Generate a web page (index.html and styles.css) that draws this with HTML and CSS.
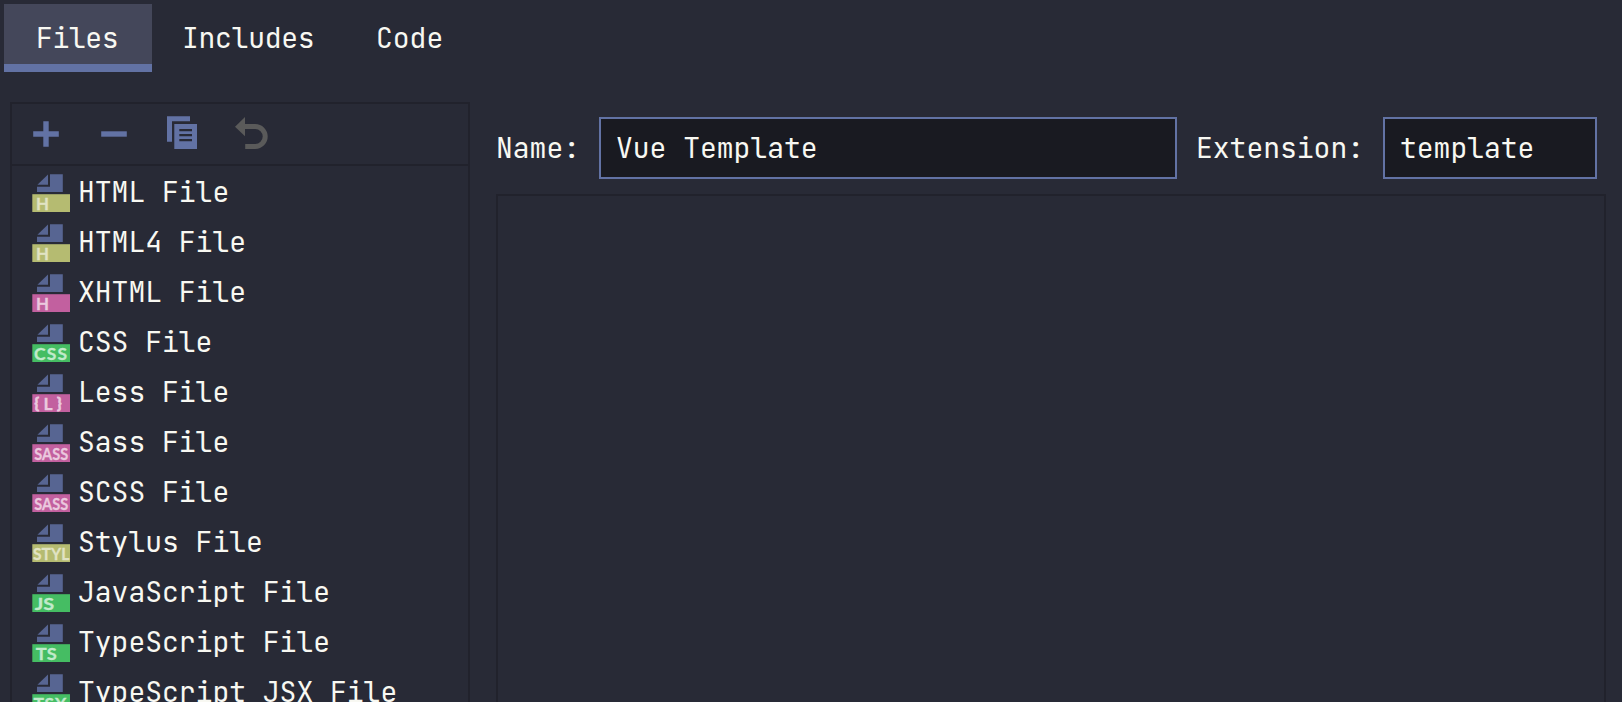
FILE: index.html
```
<!DOCTYPE html>
<html lang="en">
<head>
<meta charset="utf-8">
<title>File Templates</title>
<link rel="stylesheet" href="styles.css">
</head>
<body>
<svg class="defs" width="0" height="0">
  <symbol id="page" viewBox="0 0 38 38">
    <path d="M18 0.3H30.8V18H5V12.7H18Z"/>
    <path d="M5.4 10.7L16 0.5V10.7Z"/>
  </symbol>
</svg>
<nav class="tabs">
  <div class="tab active">Files</div>
  <div class="tab includes">Includes</div>
  <div class="tab">Code</div>
</nav>
<main class="content">
  <section class="sidebar">
    <div class="toolbar">
      <svg class="tool" width="34" height="34" viewBox="0 0 34 34"><path d="M4.2 14.3H14.3V4.2H19.7V14.3H29.8V19.7H19.7V29.8H14.3V19.7H4.2Z"/></svg>
      <svg class="tool" width="34" height="34" viewBox="0 0 34 34"><path d="M4.2 14.3H29.8V19.7H4.2Z"/></svg>
      <svg class="tool" width="34" height="34" viewBox="0 0 34 34"><path d="M2 -0.8H25V4.2H7V24.8H2Z"/><path fill-rule="evenodd" d="M9.3 7H32V32H9.3ZM14.3 12V14.3H27V12ZM14.3 17V19.3H27V17ZM14.3 22V24.3H27V22Z"/></svg>
      <svg class="tool disabled" width="34" height="34" viewBox="0 0 34 34"><path d="M2 9.8L12 0V19.2Z"/><path class="arc" d="M11.5 9.5H22.2A10 10 0 0 1 22.2 29.5H12.2"/></svg>
    </div>
    <div class="list">
      <div class="row"><svg class="icon olive" width="38" height="38"><use href="#page"/><rect x="0.3" y="20.2" width="37.7" height="17.8"/><text x="4" y="36" textLength="13" lengthAdjust="spacingAndGlyphs">H</text></svg>HTML File</div>
      <div class="row"><svg class="icon olive" width="38" height="38"><use href="#page"/><rect x="0.3" y="20.2" width="37.7" height="17.8"/><text x="4" y="36" textLength="13" lengthAdjust="spacingAndGlyphs">H</text></svg>HTML4 File</div>
      <div class="row"><svg class="icon pink" width="38" height="38"><use href="#page"/><rect x="0.3" y="20.2" width="37.7" height="17.8"/><text x="4" y="36" textLength="13" lengthAdjust="spacingAndGlyphs">H</text></svg>XHTML File</div>
      <div class="row"><svg class="icon green" width="38" height="38"><use href="#page"/><rect x="0.3" y="20.2" width="37.7" height="17.8"/><text x="2" y="35.6" textLength="33">CSS</text></svg>CSS File</div>
      <div class="row"><svg class="icon pink" width="38" height="38"><use href="#page"/><rect x="0.3" y="20.2" width="37.7" height="17.8"/><text x="2.4" y="34" class="brace">{</text><text x="11.5" y="36">L</text><text x="25" y="34" class="brace">}</text></svg>Less File</div>
      <div class="row"><svg class="icon pink" width="38" height="38"><use href="#page"/><rect x="0.3" y="20.2" width="37.7" height="17.8"/><text x="2.3" y="35.8" textLength="34" lengthAdjust="spacingAndGlyphs">SASS</text></svg>Sass File</div>
      <div class="row"><svg class="icon pink" width="38" height="38"><use href="#page"/><rect x="0.3" y="20.2" width="37.7" height="17.8"/><text x="2.3" y="35.8" textLength="34" lengthAdjust="spacingAndGlyphs">SASS</text></svg>SCSS File</div>
      <div class="row"><svg class="icon olive" width="38" height="38"><use href="#page"/><rect x="0.3" y="20.2" width="37.7" height="17.8"/><text x="1" y="35.8" textLength="36.3" lengthAdjust="spacingAndGlyphs">STYL</text></svg>Stylus File</div>
      <div class="row"><svg class="icon green" width="38" height="38"><use href="#page"/><rect x="0.3" y="20.2" width="37.7" height="17.8"/><text x="2.7" y="35.6" textLength="19.5" lengthAdjust="spacingAndGlyphs">JS</text></svg>JavaScript File</div>
      <div class="row"><svg class="icon green" width="38" height="38"><use href="#page"/><rect x="0.3" y="20.2" width="37.7" height="17.8"/><text x="3.8" y="36" textLength="21" lengthAdjust="spacingAndGlyphs">TS</text></svg>TypeScript File</div>
      <div class="row"><svg class="icon green" width="38" height="38"><use href="#page"/><rect x="0.3" y="20.2" width="37.7" height="17.8"/><text x="1.5" y="36" textLength="33">TSX</text></svg>TypeScript JSX File</div>
    </div>
  </section>
  <section class="detail">
    <div class="fields">
      <span class="label">Name:</span>
      <div class="field name">Vue Template</div>
      <span class="label ext-label">Extension:</span>
      <div class="field ext">template</div>
    </div>
    <div class="editor"></div>
  </section>
</main>
</body>
</html>
```
FILE: styles.css
```
* { box-sizing: border-box; }
body {
  margin: 0;
  height: 702px;
  overflow: hidden;
  background: #282a36;
  color: #f8f8f2;
  font: 28px/50px "JetBrains Mono", "DejaVu Sans Mono", monospace;
  display: flex;
  flex-direction: column;
}
.defs { display: none; }
.tabs { display: flex; padding: 4px 0 0 4px; }
.tab { height: 68px; line-height: 68px; padding: 0 30px; }
.tab.active { width: 148px; padding: 0 32px; letter-spacing: -0.35px; background: #44475a; box-shadow: inset 0 -8px #6272a4; }
.tab.includes { width: 194px; letter-spacing: -0.25px; }
.content { flex: 1; min-height: 0; display: flex; padding: 30px 16px 0 10px; gap: 26px; }
.sidebar { width: 460px; border: 2px solid #21222c; border-bottom: 0; overflow: hidden; }
.toolbar { height: 62px; border-bottom: 2px solid #21222c; display: flex; align-items: center; gap: 34px; padding-left: 17px; }
.tool { fill: #6272a4; overflow: visible; }
.tool.disabled { fill: #5a5a5a; }
.arc { fill: none; stroke: #5a5a5a; stroke-width: 5; }
.list { padding: 1px 0 0 20px; }
.row { height: 50px; display: flex; align-items: center; gap: 8px; white-space: nowrap; }
.icon { flex: none; fill: #576592; overflow: visible; margin-top: 2px; }
.icon text { font: 700 17.5px Lato, sans-serif; stroke-width: 0.3px; }
.icon .brace { font-size: 15px; stroke-width: 0.8px; }
.olive rect { fill: #b5bb71; }
.olive text { fill: #e1e3c4; stroke: #e1e3c4; }
.pink rect { fill: #c2609f; }
.pink text { fill: #ebc8de; stroke: #ebc8de; }
.green rect { fill: #45bd63; }
.green text { fill: #c1eacb; stroke: #c1eacb; }
.detail { flex: 1; display: flex; flex-direction: column; }
.fields { display: flex; align-items: center; padding: 15px 9px 15px 0; }
.label { width: 103px; }
.ext-label { width: 187px; margin-left: 19px; }
.field { height: 62px; line-height: 58px; padding-left: 15px; background: #191a21; border: 2px solid #6272a4; }
.name { width: 578px; }
.ext { width: 214px; }
.editor { flex: 1; border: 2px solid #21222c; border-bottom: 0; }
```
